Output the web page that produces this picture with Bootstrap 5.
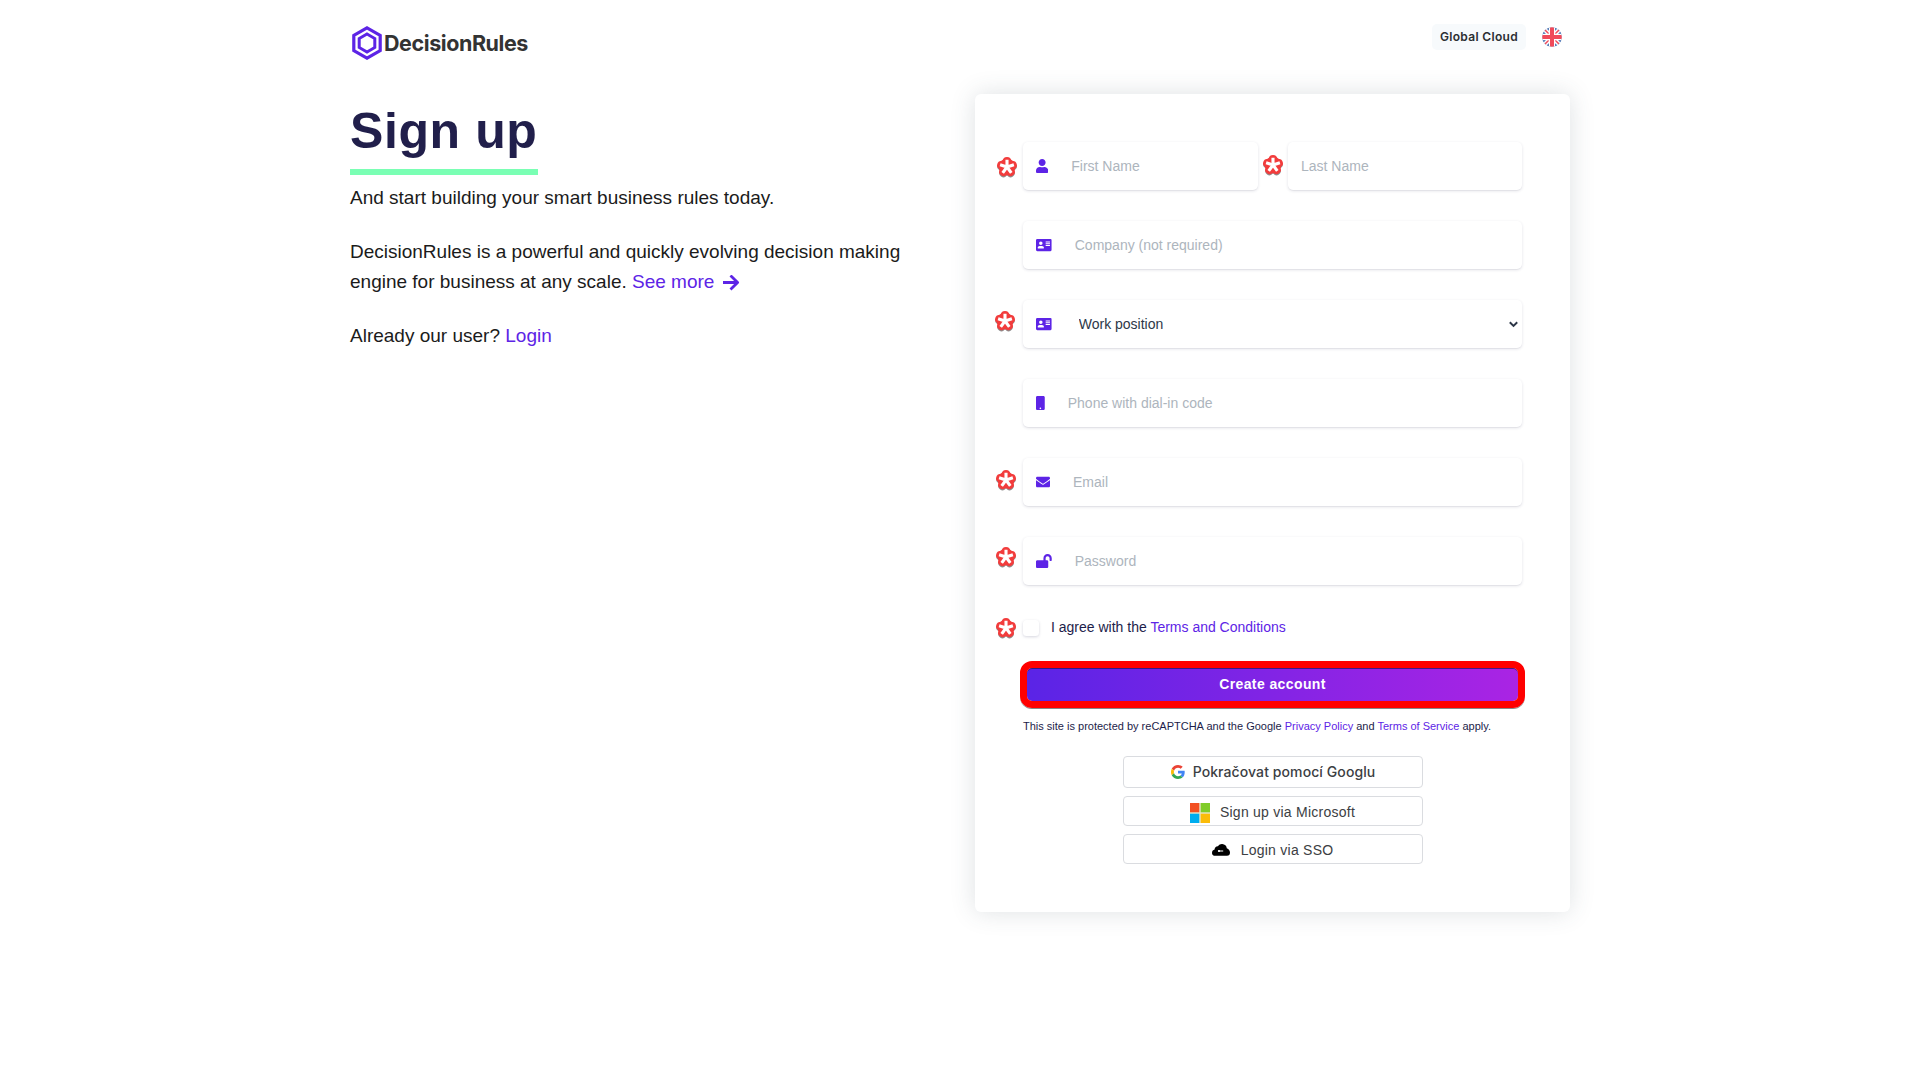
<!DOCTYPE html>
<html lang="en">
<head>
<meta charset="utf-8">
<meta name="viewport" content="width=device-width, initial-scale=1">
<title>DecisionRules - Sign up</title>
<link href="https://cdn.jsdelivr.net/npm/bootstrap@5.3.0/dist/css/bootstrap.min.css" rel="stylesheet">
<style>
  :root { --violet: #5d24e6; }
  body { font-family: "Liberation Sans", Arial, sans-serif; font-size: 14px; color: #1d1d4a; background: #fff; }
  a { color: var(--violet); text-decoration: none; }
  .page { width: 1220px; }
  .topbar { height: 94px; }
  .brand { margin: 26px 0 0 2px; height: 34px; }
  .brand-name { font: 700 21.5px/34px Inter, sans-serif; color: #333; letter-spacing: -.42px; margin-left: 2px; }
  .cloud-pill { margin-top: 24px; height: 26px; width: 94px; border-radius: 5px; background: #f7fafc; color: #2b2f33; font: 600 12px/26px Inter, sans-serif; letter-spacing: .33px; text-align: center; }
  .flag { margin: 27px 8px 0 16px; }
  .intro { width: 580px; color: #1b1b1b; font-size: 19px; line-height: 30px; }
  .intro p { margin-bottom: 24px; }
  .headline { font-size: 50px; font-weight: 700; line-height: 60px; color: #211f4b; border-bottom: 6px solid #7affb4; margin: 7px 0 8px; padding-bottom: 8px; letter-spacing: .6px; }
  .signup-card { width: 595px; height: 818px; padding: 48px; border-radius: 6px; background: #fff; box-shadow: 0 0 24px rgba(60,80,90,.17); }
  .field { height: 48px; margin-bottom: 31px; padding-left: 13px; border-radius: 5px; box-shadow: 0 1px 3px rgba(50,50,93,.15), 0 1px 0 rgba(0,0,0,.03); }
  .field svg { flex: none; fill: var(--violet); }
  .field .form-control, .field .form-select { border: 0; background-color: transparent; padding: 0; height: 48px; font-size: 14px; color: #2d3748; box-shadow: none; }
  .field .form-control::placeholder { color: #adb5bd; opacity: 1; }
  .field .form-control { margin-left: 23px; }
  .field .form-select { margin-left: 27px; background-image: none; }
  .star { position: absolute; width: 22px; height: 22px; }
  .agree { height: 16px; margin-top: 35px; }
  .agree-box { width: 16px; height: 16px; border: 0; border-radius: 4px; margin: 0 12px 0 0; box-shadow: 0 1px 3px rgba(50,50,93,.2); }
  .agree-text { line-height: 16px; margin-top: -2px; }
  .cta { height: 47px; margin: 25px -3px 0; width: 505px; padding: 0 0 1px; border: 7px solid #f00; border-radius: 12px; color: #fff; font-size: 14px; font-weight: 700; letter-spacing: .4px; line-height: 32px; background: linear-gradient(90deg, #5a24e6, #aa24e4) padding-box; box-shadow: inset 0 1px 0 rgba(30,20,90,.7), 0 1px 0 #888; }
  .cta:hover { color: #fff; }
  .legal { font-size: 11px; line-height: 16px; margin-top: 10px; white-space: nowrap; }
  .socials { margin-top: 22px; }
  .social { width: 300px; height: 30px; padding: 1px 0 0; border: 1px solid #dadce0; border-radius: 4px; color: #3c4043; font-size: 14px; line-height: 28px; letter-spacing: .25px; background: #fff; }
  .social span { padding-top: 1px; }
  .social-google { height: 32px; padding: 0 0 0 1px; font-family: Inter, sans-serif; font-weight: 500; letter-spacing: .09px; }
  .social-google span { padding: 0; }
</style>
</head>
<body>
<svg width="0" height="0" class="position-absolute" aria-hidden="true">
  <defs>
    <symbol id="star" viewBox="-11 -11 22 22">
      <g fill="none" stroke-linecap="round">
        <path d="M0 .9V-5.1M0 .9L5.7-.9M0 .9L3.6 5.9M0 .9L-3.6 5.9M0 .9L-5.7-.9" stroke="#8d8d8d" stroke-width="8" transform="translate(0 .3)"/>
        <circle r="8.4" fill="#f23c3c"/>
        <path d="M0 0V-6M0 0L5.8-1.8M0 0L3.7 5M0 0L-3.7 5M0 0L-5.8-1.8" stroke="#f23c3c" stroke-width="8.2"/>
        <path d="M0 0V-7.2M0 0L6.9-2.2M0 0L4.3 5.9M0 0L-4.3 5.9M0 0L-6.9-2.2" stroke="#fff" stroke-width="3.1" stroke-linecap="butt"/>
      </g>
    </symbol>
    <symbol id="idcard" viewBox="0 0 576 512">
      <path fill-rule="evenodd" d="M48 32H528a48 48 0 0 1 48 48V432a48 48 0 0 1-48 48H48a48 48 0 0 1-48-48V80a48 48 0 0 1 48-48zM176 128a64 64 0 1 0 0 128a64 64 0 1 0 0-128zM131 288C94 288 64 315 64 349V364C64 375 74 384 86 384H266C278 384 288 375 288 364V349C288 315 258 288 221 288C190 300 162 300 131 288zM360 128a8 8 0 0 0-8 8v16a8 8 0 0 0 8 8H504a8 8 0 0 0 8-8V136a8 8 0 0 0-8-8zM360 192a8 8 0 0 0-8 8v16a8 8 0 0 0 8 8H504a8 8 0 0 0 8-8V200a8 8 0 0 0-8-8zM360 256a8 8 0 0 0-8 8v16a8 8 0 0 0 8 8H504a8 8 0 0 0 8-8V264a8 8 0 0 0-8-8z"/>
    </symbol>
  </defs>
</svg>
<div class="page mx-auto min-vh-100">
  <header class="topbar d-flex justify-content-between align-items-start">
    <a href="#" class="brand d-flex align-items-center">
      <svg width="30" height="34" viewBox="0 0 30 34" fill="none" stroke="#5d24e6"><path d="M15 1.9L28.2 9.4V24.6L15 32.1L1.8 24.6V9.4Z" stroke-width="3.2"/><path d="M15 8L22.8 12.5V21.5L15 26L7.2 21.5V12.5Z" stroke-width="3"/></svg>
      <span class="brand-name">DecisionRules</span>
    </a>
    <div class="d-flex align-items-start">
      <div class="cloud-pill">Global Cloud</div>
      <svg class="flag" width="20" height="20" viewBox="0 0 20 20"><clipPath id="round"><circle cx="10" cy="10" r="9.8"/></clipPath><g clip-path="url(#round)"><path fill="#2f5fa8" d="M0 0h20v20H0z"/><path d="M0 0l20 20M20 0L0 20" stroke="#fff" stroke-width="4.4"/><path d="M0 0l20 20M20 0L0 20" stroke="#f04a5a" stroke-width="1.5"/><path d="M10 0v20M0 10h20" stroke="#fff" stroke-width="6.4"/><path d="M10 0v20M0 10h20" stroke="#f04a5a" stroke-width="4"/></g></svg>
    </div>
  </header>
  <main class="d-flex justify-content-between align-items-start">
    <section class="intro">
      <h1 class="headline d-inline-block">Sign up</h1>
      <p>And start building your smart business rules today.</p>
      <p>DecisionRules is a powerful and quickly evolving decision making<br>engine for business at any scale. <a href="#">See more <svg style="margin-left:2px" width="18" height="16" viewBox="0 0 18 16" fill="none" stroke="#5d24e6" stroke-width="2.8"><path d="M1 7.5H15.5M8.5 .5L15.6 7.5L8.5 14.5" stroke-linejoin="round"/></svg></a></p>
      <p>Already our user? <a href="#">Login</a></p>
    </section>
    <form class="signup-card position-relative">
      <svg class="star" style="left:21px;top:62px"><use href="#star"/></svg>
      <svg class="star" style="left:287px;top:60px"><use href="#star"/></svg>
      <svg class="star" style="left:19px;top:216px"><use href="#star"/></svg>
      <svg class="star" style="left:20px;top:375px"><use href="#star"/></svg>
      <svg class="star" style="left:20px;top:452px"><use href="#star"/></svg>
      <svg class="star" style="left:20px;top:523px"><use href="#star"/></svg>
      <div class="d-flex justify-content-between">
        <div class="field d-flex align-items-center" style="width:235px">
          <svg width="12.25" height="14" viewBox="0 0 448 512"><path d="M224 256c70.7 0 128-57.3 128-128S294.7 0 224 0 96 57.3 96 128s57.3 128 128 128zm89.6 32h-16.7c-22.2 10.2-46.9 16-72.9 16s-50.6-5.8-72.9-16h-16.7C60.2 288 0 348.2 0 422.4V464c0 26.5 21.5 48 48 48h352c26.5 0 48-21.5 48-48v-41.6c0-74.2-60.2-134.4-134.4-134.4z"/></svg>
          <input class="form-control" placeholder="First Name">
        </div>
        <div class="field d-flex align-items-center" style="width:234px">
          <input class="form-control ms-0" placeholder="Last Name">
        </div>
      </div>
      <div class="field d-flex align-items-center">
        <svg width="15.75" height="14"><use href="#idcard"/></svg>
        <input class="form-control" placeholder="Company (not required)">
      </div>
      <div class="field d-flex align-items-center pe-1">
        <svg width="15.75" height="14"><use href="#idcard"/></svg>
        <select class="form-select"><option>Work position</option></select>
        <svg width="9" height="7" viewBox="0 0 9 7"><path d="M.8 1.3L4.5 4.9L8.2 1.3" fill="none" stroke="#2d3748" stroke-width="2"/></svg>
      </div>
      <div class="field d-flex align-items-center">
        <svg width="8.75" height="14" viewBox="0 0 320 512"><path d="M272 0H48C21.5 0 0 21.5 0 48v416c0 26.5 21.5 48 48 48h224c26.5 0 48-21.5 48-48V48c0-26.5-21.5-48-48-48zM160 480c-17.7 0-32-14.3-32-32s14.3-32 32-32 32 14.3 32 32-14.3 32-32 32z"/></svg>
        <input class="form-control" placeholder="Phone with dial-in code">
      </div>
      <div class="field d-flex align-items-center">
        <svg width="14" height="14" viewBox="0 0 512 512"><path d="M502.3 190.8c3.9-3.1 9.7-.2 9.7 4.7V400c0 26.5-21.5 48-48 48H48c-26.5 0-48-21.5-48-48V195.6c0-5 5.7-7.8 9.7-4.7 22.4 17.4 52.1 39.5 154.1 113.6 21.1 15.4 56.7 47.8 92.2 47.6 35.7.3 72-32.8 92.3-47.6 102-74.1 131.6-96.3 154-113.7zM256 320c23.2.4 56.6-29.2 73.4-41.4 132.7-96.3 142.8-104.7 173.4-128.7 5.8-4.5 9.2-11.5 9.2-18.9v-19c0-26.5-21.5-48-48-48H48c-26.5 0-48 21.5-48 48v19c0 7.4 3.4 14.3 9.2 18.9 30.6 23.9 40.7 32.4 173.4 128.7 16.8 12.2 50.2 41.8 73.4 41.4z"/></svg>
        <input class="form-control" placeholder="Email">
      </div>
      <div class="field d-flex align-items-center">
        <svg width="15.75" height="14" viewBox="0 0 576 512"><path d="M423.5 0C339.5.3 272 69.5 272 153.5V224H48c-26.5 0-48 21.5-48 48v192c0 26.5 21.5 48 48 48h352c26.5 0 48-21.5 48-48V272c0-26.5-21.5-48-48-48h-48v-71.1c0-39.6 31.7-72.5 71.3-72.9 40-.4 72.7 32.1 72.7 72v80c0 13.3 10.7 24 24 24h32c13.3 0 24-10.7 24-24v-80C576 68 507.5-.3 423.5 0z"/></svg>
        <input type="password" class="form-control" placeholder="Password">
      </div>
      <div class="agree d-flex align-items-center">
        <input type="checkbox" class="form-check-input agree-box" id="agree">
        <label class="agree-text" for="agree">I agree with the <a href="#">Terms and Conditions</a></label>
      </div>
      <button type="button" class="btn cta d-block">Create account</button>
      <div class="legal">This site is protected by reCAPTCHA and the Google <a href="#">Privacy Policy</a> and <a href="#">Terms of Service</a> apply.</div>
      <div class="socials d-flex flex-column align-items-center gap-2">
        <button type="button" class="btn social social-google d-flex align-items-center justify-content-center">
          <svg class="me-2" width="14" height="14" viewBox="0 0 48 48"><path fill="#EA4335" d="M24 9.5c3.54 0 6.71 1.22 9.21 3.6l6.85-6.85C35.9 2.38 30.47 0 24 0 14.62 0 6.51 5.38 2.56 13.22l7.98 6.19C12.43 13.72 17.74 9.5 24 9.5z"/><path fill="#4285F4" d="M46.98 24.55c0-1.57-.15-3.09-.38-4.55H24v9.02h12.94c-.58 2.96-2.26 5.48-4.78 7.18l7.73 6c4.51-4.18 7.09-10.36 7.09-17.65z"/><path fill="#FBBC05" d="M10.53 28.59c-.48-1.45-.76-2.99-.76-4.59s.27-3.14.76-4.59l-7.98-6.19C.92 16.46 0 20.12 0 24c0 3.88.92 7.54 2.56 10.78l7.97-6.19z"/><path fill="#34A853" d="M24 48c6.48 0 11.93-2.13 15.89-5.81l-7.73-6c-2.15 1.45-4.92 2.3-8.16 2.3-6.26 0-11.57-4.22-13.47-9.91l-7.98 6.19C6.51 42.62 14.62 48 24 48z"/></svg>
          <span>Pokračovat pomocí Googlu</span>
        </button>
        <button type="button" class="btn social d-flex align-items-center justify-content-center">
          <svg width="20" height="20" viewBox="0 0 20 20" style="margin:3px 10px 0 0"><path fill="#e8e4c8" d="M0 0h20v20H0z"/><path fill="#f25022" d="M0 0h9.3v9.3H0z"/><path fill="#80cc28" d="M10.7 0H20v9.3h-9.3z"/><path fill="#00adef" d="M0 10.7h9.3V20H0z"/><path fill="#fbbc09" d="M10.7 10.7H20V20h-9.3z"/></svg>
          <span>Sign up via Microsoft</span>
        </button>
        <button type="button" class="btn social d-flex align-items-center justify-content-center">
          <svg width="18" height="12" viewBox="0 0 18 12" style="margin:1px 11px 0 0"><path d="M3.2 11.8C1.2 11.8 0 10.6 0 8.9C0 7 1.2 5.9 2.6 5.6C2.6 3.4 4.2 2 6 2.2C7 .7 8.6 0 10.2.1C12.8.3 14.6 1.9 14.8 4.2C16.8 4.9 18 6.5 18 8.6C18 10.8 16.9 11.8 15 11.8Z"/><path d="M6.2 7h5" stroke="#fff" stroke-width="1"/><circle cx="7" cy="7" r="1.1" fill="#fff"/></svg>
          <span>Login via SSO</span>
        </button>
      </div>
    </form>
  </main>
</div>
<script src="https://cdn.jsdelivr.net/npm/bootstrap@5.3.0/dist/js/bootstrap.bundle.min.js"></script>
</body>
</html>
